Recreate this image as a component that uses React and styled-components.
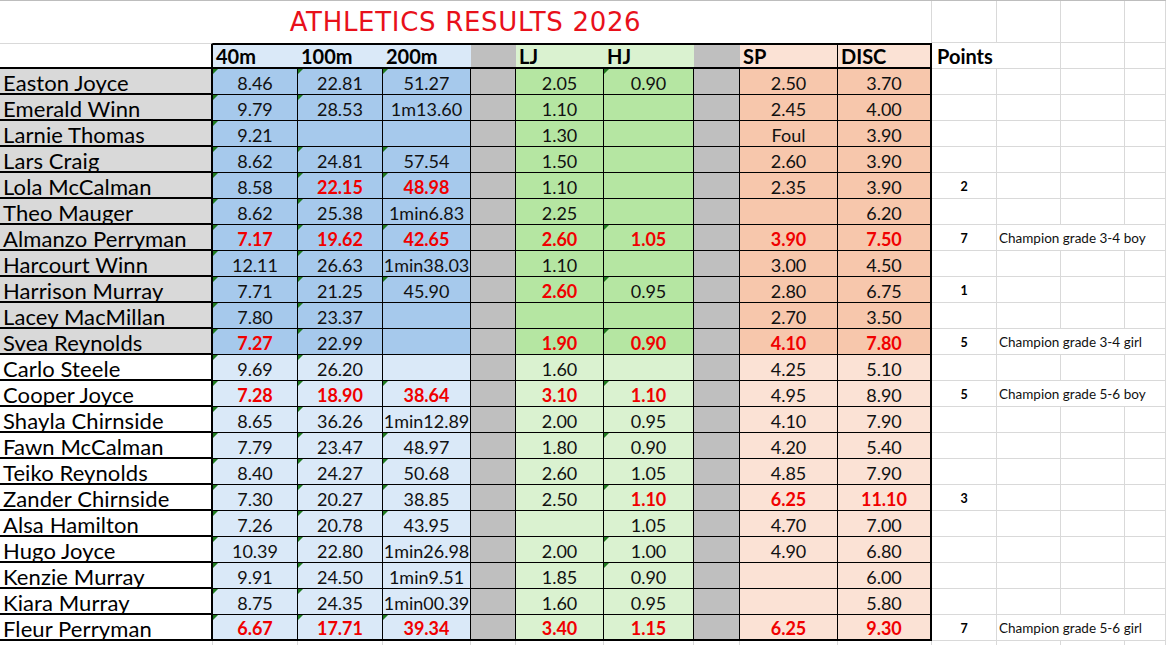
import React from "react";
import styled, { createGlobalStyle, css } from "styled-components";

const Global = createGlobalStyle`
  html, body { margin: 0; padding: 0; overflow: hidden; background: #fff; }
  body { font-family: Lato, "Liberation Sans", sans-serif; }
`;

const GRID = "#D9D9D9";
const LINE = "#000";

const Sheet = styled.div`
  display: grid;
  grid-template-columns: 213px 85px 85px 88px 45px 88px 90px 46px 98px 94px 65px 64px 64px 41px;
  grid-template-rows: 42px;
  grid-auto-rows: 26px;
  width: 1166px;
  border-top: 1px solid #BDBDBD;
`;

const baseCell = css`
  box-sizing: border-box;
  display: flex;
  align-items: flex-end;
  overflow: hidden;
  white-space: nowrap;
  position: relative;
`;

const TitleCell = styled.div`
  ${baseCell};
  grid-column: 1 / 11;
  justify-content: center;
  align-items: flex-start;
  padding-top: 6px;
  font-family: "DejaVu Sans", Verdana, sans-serif;
  font-size: 26px;
  letter-spacing: 0.7px;
  line-height: 1.2;
  color: #E8101A;
  border-right: 1px solid ${GRID};
`;

const Blank = styled.div`
  ${baseCell};
  border-right: 1px solid ${GRID};
  border-bottom: 1px solid ${GRID};
`;

const HeaderCell = styled.div`
  ${baseCell};
  background: ${(p) => p.$bg || "#fff"};
  border-top: ${(p) => (p.$corner ? `1px solid ${GRID}` : `2px solid ${LINE}`)};
  border-bottom: 2px solid ${LINE};
  border-right: ${(p) =>
    p.$right === "thick" ? `2px solid ${LINE}` : p.$right === "thin" ? `1px solid ${LINE}` : "none"};
  padding: 0 0 1px 3px;
  font-weight: 700;
  font-size: 20px;
  line-height: 1;
  color: #000;
`;

const PointsHead = styled.div`
  ${baseCell};
  grid-column: span 2;
  border-right: 1px solid ${GRID};
  border-bottom: 1px solid ${GRID};
  padding: 0 0 2px 5px;
  font-weight: 700;
  font-size: 20px;
  line-height: 1;
`;

const NameCell = styled.div`
  ${baseCell};
  background: ${(p) => p.$bg};
  border-right: 2px solid ${LINE};
  border-bottom: 2px solid ${LINE};
  padding: 0 0 0 3px;
  font-size: 22px;
  letter-spacing: 0.1px;
  line-height: 0.9;
  color: #000;
`;

const ValueCell = styled.div`
  ${baseCell};
  justify-content: center;
  background: ${(p) => p.$bg};
  border-right: ${(p) => (p.$thick ? 2 : 1)}px solid ${LINE};
  border-bottom: ${(p) => (p.$last ? 2 : 1)}px solid ${LINE};
  padding-bottom: 2px;
  font-size: 18px;
  line-height: 1;
  font-weight: ${(p) => (p.$best ? 700 : 400)};
  color: ${(p) => (p.$best ? "#F00000" : "#111")};
  ${(p) =>
    p.$tri &&
    css`
      &::before {
        content: "";
        position: absolute;
        top: 0;
        left: 0;
        border-top: 5px solid #1F7A1F;
        border-right: 5px solid transparent;
      }
    `}
`;

const PointsCell = styled.div`
  ${baseCell};
  justify-content: center;
  border-right: 1px solid ${GRID};
  border-bottom: 1px solid ${GRID};
  padding-bottom: 5px;
  font-size: 12.5px;
  font-weight: 700;
  line-height: 1;
`;

const NoteCell = styled.div`
  ${baseCell};
  grid-column: span 3;
  border-right: 1px solid ${GRID};
  border-bottom: 1px solid ${GRID};
  padding: 0 0 5px 2px;
  font-size: 13.5px;
  line-height: 1;
  color: #111;
`;

const BLUE = ["#A6C9EC", "#DAE9F8"];
const GREEN = ["#B5E6A2", "#DAF2D0"];
const ORANGE = ["#F7C7AC", "#FBE2D5"];
const NAME = ["#D9D9D9", "#FFFFFF"];
const GREY = "#BFBFBF";

// value prefixed with * => best (bold red)
const rows = [
  ["Easton Joyce", "8.46", "22.81", "51.27", "2.05", "0.90", "2.50", "3.70", "", "", true],
  ["Emerald Winn", "9.79", "28.53", "1m13.60", "1.10", "", "2.45", "4.00", "", "", false],
  ["Larnie Thomas", "9.21", "", "", "1.30", "", "Foul", "3.90", "", "", false],
  ["Lars Craig", "8.62", "24.81", "57.54", "1.50", "", "2.60", "3.90", "", "", false],
  ["Lola McCalman", "8.58", "*22.15", "*48.98", "1.10", "", "2.35", "3.90", "2", "", false],
  ["Theo Mauger", "8.62", "25.38", "1min6.83", "2.25", "", "", "6.20", "", "", false],
  ["Almanzo Perryman", "*7.17", "*19.62", "*42.65", "*2.60", "*1.05", "*3.90", "*7.50", "7", "Champion grade 3-4 boy", true],
  ["Harcourt Winn", "12.11", "26.63", "1min38.03", "1.10", "", "3.00", "4.50", "", "", false],
  ["Harrison Murray", "7.71", "21.25", "45.90", "*2.60", "0.95", "2.80", "6.75", "1", "", true],
  ["Lacey MacMillan", "7.80", "23.37", "", "", "", "2.70", "3.50", "", "", false],
  ["Svea Reynolds", "*7.27", "22.99", "", "*1.90", "*0.90", "*4.10", "*7.80", "5", "Champion grade 3-4 girl", true],
  ["Carlo Steele", "9.69", "26.20", "", "1.60", "", "4.25", "5.10", "", "", false],
  ["Cooper Joyce", "*7.28", "*18.90", "*38.64", "*3.10", "*1.10", "4.95", "8.90", "5", "Champion grade 5-6 boy", true],
  ["Shayla Chirnside", "8.65", "36.26", "1min12.89", "2.00", "0.95", "4.10", "7.90", "", "", false],
  ["Fawn McCalman", "7.79", "23.47", "48.97", "1.80", "0.90", "4.20", "5.40", "", "", true],
  ["Teiko Reynolds", "8.40", "24.27", "50.68", "2.60", "1.05", "4.85", "7.90", "", "", false],
  ["Zander Chirnside", "7.30", "20.27", "38.85", "2.50", "*1.10", "*6.25", "*11.10", "3", "", true],
  ["Alsa Hamilton", "7.26", "20.78", "43.95", "", "1.05", "4.70", "7.00", "", "", false],
  ["Hugo Joyce", "10.39", "22.80", "1min26.98", "2.00", "1.00", "4.90", "6.80", "", "", true],
  ["Kenzie Murray", "9.91", "24.50", "1min9.51", "1.85", "0.90", "", "6.00", "", "", true],
  ["Kiara Murray", "8.75", "24.35", "1min00.39", "1.60", "0.95", "", "5.80", "", "", false],
  ["Fleur Perryman", "*6.67", "*17.71", "*39.34", "*3.40", "*1.15", "*6.25", "*9.30", "7", "Champion grade 5-6 girl", false],
];

const parse = (v) => ({ best: v.startsWith("*"), text: v.replace("*", "") });
const isPlainNumber = (t) => /^\d+(\.\d+)?$/.test(t);

function Value({ v, bg, tri, thick, last }) {
  const { best, text } = parse(v);
  return (
    <ValueCell $bg={bg} $best={best} $tri={tri} $thick={thick} $last={last}>
      {text}
    </ValueCell>
  );
}

export default function App() {
  return (
    <>
      <Global />
      <Sheet>
        <TitleCell>ATHLETICS RESULTS 2026</TitleCell>
        <Blank />
        <Blank />
        <Blank />
        <Blank />

        <HeaderCell $corner $right="thick" />
        <HeaderCell $bg={BLUE[1]}>40m</HeaderCell>
        <HeaderCell $bg={BLUE[1]}>100m</HeaderCell>
        <HeaderCell $bg={BLUE[1]}>200m</HeaderCell>
        <HeaderCell $bg={GREY} />
        <HeaderCell $bg={GREEN[1]}>LJ</HeaderCell>
        <HeaderCell $bg={GREEN[1]}>HJ</HeaderCell>
        <HeaderCell $bg={GREY} />
        <HeaderCell $bg={ORANGE[1]} $right="thin">SP</HeaderCell>
        <HeaderCell $bg={ORANGE[1]} $right="thick">DISC</HeaderCell>
        <PointsHead>Points</PointsHead>
        <Blank />
        <Blank />

        {rows.map((r, i) => {
          const shade = i < 11 ? 0 : 1;
          const last = i === rows.length - 1;
          const [name, m40, m100, m200, lj, hj, sp, disc, pts, note, hjTri] = r;
          const t200 = parse(m200).text;
          return (
            <React.Fragment key={name}>
              <NameCell $bg={NAME[shade]}>{name}</NameCell>
              <Value v={m40} bg={BLUE[shade]} tri last={last} />
              <Value v={m100} bg={BLUE[shade]} tri={m100 !== ""} last={last} />
              <Value v={m200} bg={BLUE[shade]} tri={isPlainNumber(t200)} last={last} />
              <Value v="" bg={GREY} last={last} />
              <Value v={lj} bg={GREEN[shade]} last={last} />
              <Value v={hj} bg={GREEN[shade]} tri={hjTri} last={last} />
              <Value v="" bg={GREY} last={last} />
              <Value v={sp} bg={ORANGE[shade]} last={last} />
              <Value v={disc} bg={ORANGE[shade]} thick last={last} />
              <PointsCell>{pts}</PointsCell>
              {note ? (
                <NoteCell>{note}</NoteCell>
              ) : (
                <>
                  <Blank />
                  <Blank />
                  <Blank />
                </>
              )}
            </React.Fragment>
          );
        })}

        {Array.from({ length: 14 }).map((_, i) => (
          <Blank key={"b" + i} />
        ))}
      </Sheet>
    </>
  );
}
